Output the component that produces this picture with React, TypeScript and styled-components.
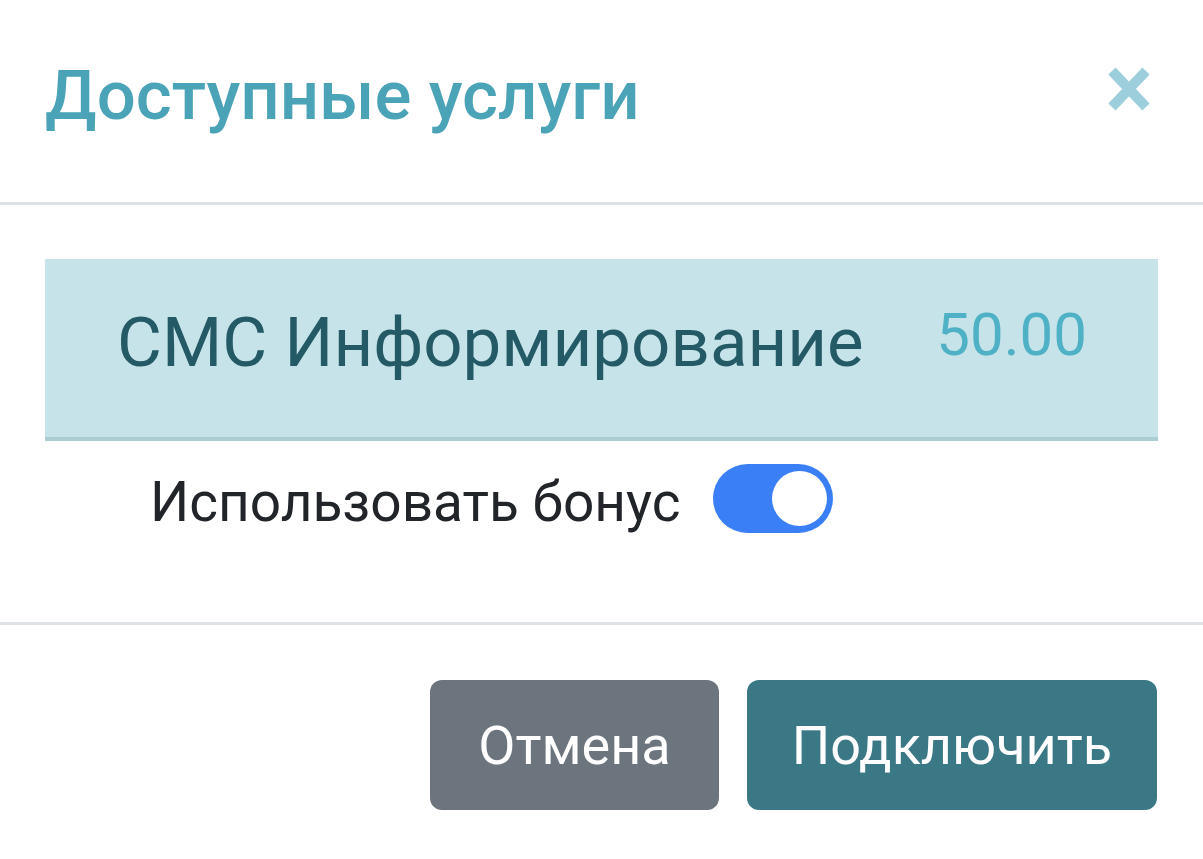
import React from "react";
import styled, { createGlobalStyle } from "styled-components";

const Global = createGlobalStyle`
  html, body { margin: 0; padding: 0; background: #fff; }
  body { font-family: Roboto, "Liberation Sans", Arial, sans-serif; -webkit-font-smoothing: antialiased; }
`;

const Modal = styled.div`
  width: 1203px;
  height: 859px;
  background: #fff;
  display: flex;
  flex-direction: column;
  overflow: hidden;
`;

const Header = styled.div`
  height: 205px;
  box-sizing: border-box;
  display: flex;
  align-items: center;
  justify-content: space-between;
  padding: 0 52px 10px 45px;
  border-bottom: 3px solid #dee2e6;
`;

const Title = styled.h5`
  margin: 0;
  font-size: 69px;
  font-weight: 500;
  line-height: 1.2;
  color: #4aa3b6;
`;

const CloseButton = styled.button`
  border: 0;
  background: transparent;
  padding: 0;
  width: 44px;
  height: 46px;
  margin-bottom: 14px;
  display: flex;
  align-items: center;
  justify-content: center;
  cursor: pointer;
`;

const Body = styled.div`
  padding: 54px 45px 0;
  height: 420px;
  box-sizing: border-box;
  border-bottom: 3px solid #dee2e6;
`;

const ServiceItem = styled.div`
  height: 178px;
  background: #c5e3e9;
  border-bottom: 4px solid #abcdd4;
  display: flex;
  align-items: center;
  justify-content: space-between;
  padding: 0 71px 0 72px;
`;

const ServiceName = styled.span`
  font-size: 69px;
  color: #245a66;
  line-height: 1;
  margin-bottom: 12px;
`;

const ServicePrice = styled.span`
  font-size: 60px;
  color: #4fb1c5;
  line-height: 1;
  margin-bottom: 26px;
`;

const BonusRow = styled.label`
  display: flex;
  align-items: center;
  gap: 32px;
  margin-top: 23px;
  padding-left: 105px;
  height: 69px;
`;

const BonusLabel = styled.span`
  font-size: 55px;
  color: #212529;
  line-height: 1;
  margin-top: 8px;
`;

const Toggle = styled.span<{ $on: boolean }>`
  width: 120px;
  height: 69px;
  border-radius: 35px;
  background: ${(p) => (p.$on ? "#3b7ff6" : "#dee2e6")};
  display: flex;
  align-items: center;
  justify-content: ${(p) => (p.$on ? "flex-end" : "flex-start")};
  padding: 0 6px;
  box-sizing: border-box;
`;

const Knob = styled.span`
  width: 55px;
  height: 55px;
  border-radius: 50%;
  background: #fff;
`;

const Footer = styled.div`
  display: flex;
  justify-content: flex-end;
  gap: 28px;
  padding: 55px 46px 0;
`;

const Button = styled.button<{ $variant: "secondary" | "primary" }>`
  height: 130px;
  border: 0;
  border-radius: 12px;
  padding: 0 ${(p) => (p.$variant === "primary" ? "45px" : "48px")};
  font-family: inherit;
  font-size: 54px;
  color: #fff;
  background: ${(p) => (p.$variant === "primary" ? "#3a7886" : "#6c757d")};
  cursor: pointer;
`;

export default function App() {
  return (
    <>
      <Global />
      <Modal>
        <Header>
          <Title>Доступные услуги</Title>
          <CloseButton aria-label="Закрыть">
            <svg width="44" height="46" viewBox="0 0 44 46">
              <path d="M5 5 L39 41 M39 5 L5 41" stroke="#9ccfdb" strokeWidth="10" strokeLinecap="butt" />
            </svg>
          </CloseButton>
        </Header>
        <Body>
          <ServiceItem>
            <ServiceName>СМС Информирование</ServiceName>
            <ServicePrice>50.00</ServicePrice>
          </ServiceItem>
          <BonusRow>
            <BonusLabel>Использовать бонус</BonusLabel>
            <Toggle $on={true}>
              <Knob />
            </Toggle>
          </BonusRow>
        </Body>
        <Footer>
          <Button $variant="secondary">Отмена</Button>
          <Button $variant="primary">Подключить</Button>
        </Footer>
      </Modal>
    </>
  );
}
